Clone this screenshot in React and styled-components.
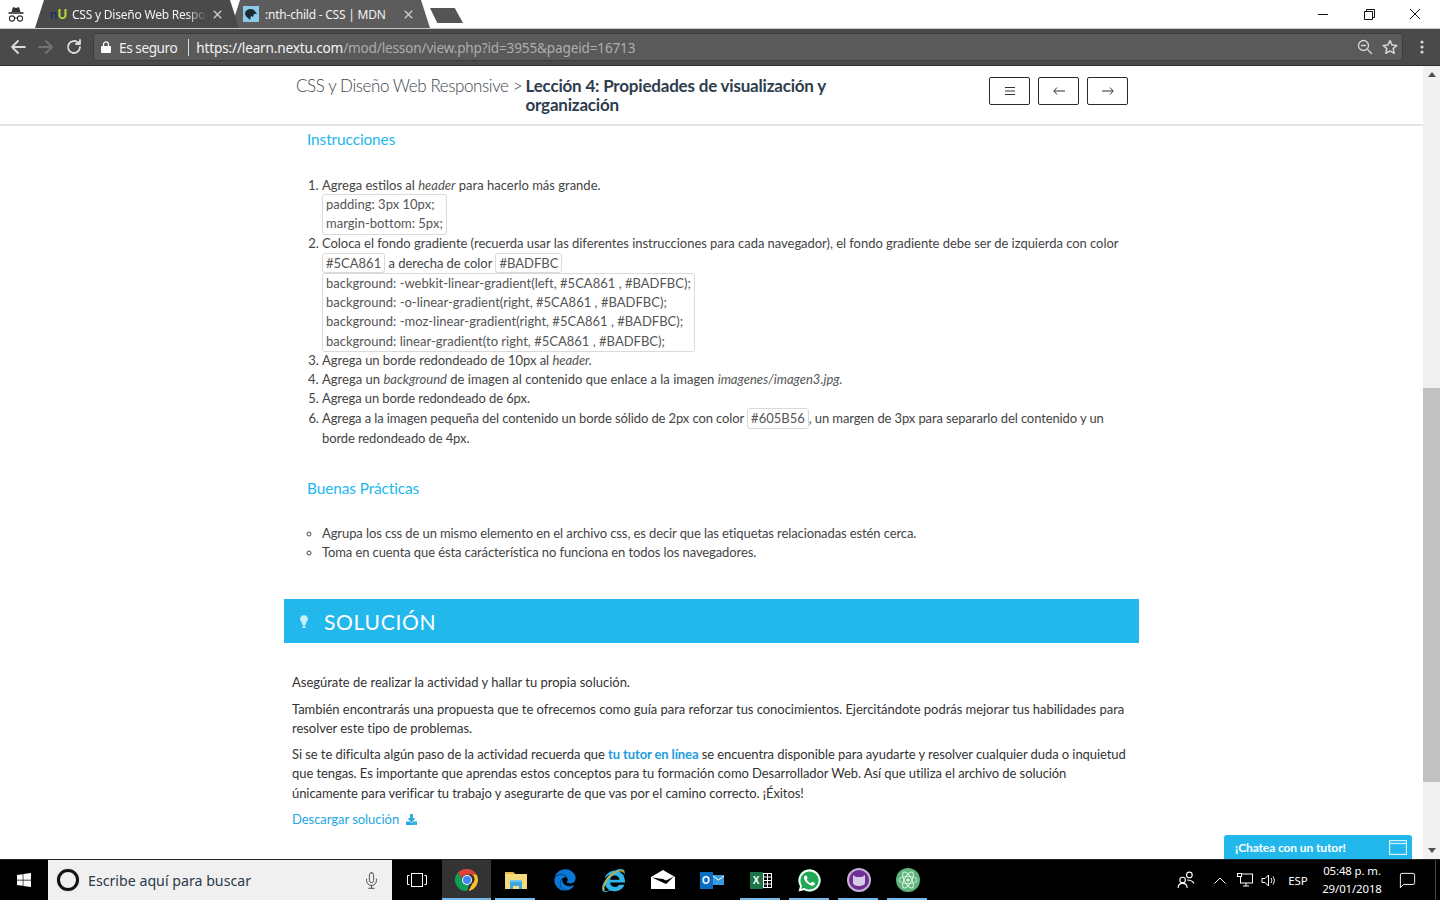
import React from "react";
import styled, { createGlobalStyle } from "styled-components";
import { FaWhatsapp, FaEdge, FaInternetExplorer, FaWindows, FaDownload } from "react-icons/fa";
import { FiMic, FiMessageSquare } from "react-icons/fi";

const Global = createGlobalStyle`
  html, body { margin: 0; padding: 0; height: 100%; overflow: hidden; background: #fff; }
  #root { height: 100%; }
  * { box-sizing: border-box; }
`;

const Page = styled.div`
  width: 1440px; height: 900px; display: flex; flex-direction: column; overflow: hidden;
  font-family: "Lato", "Liberation Sans", sans-serif; color: #333;
`;
const TitleBar = styled.div`
  height: 29px; flex: none; display: flex; align-items: flex-end; background: #fff;
  border-bottom: 1px solid #c9c9c9; font-family: "Noto Sans", sans-serif;
`;
const Incognito = styled.div`
  width: 35px; height: 28px; flex: none; display: flex; align-items: center; justify-content: flex-start; padding-left: 7px;
`;
const Tab = styled.div`
  width: ${p => p.$w}px; height: 28px; flex: none; margin-left: ${p => p.$ml || 0}px;
  background: ${p => (p.$active ? "#4a4a4a" : "#5c5c5c")};
  clip-path: polygon(0 100%, 9px 0, calc(100% - 9px) 0, 100% 100%);
  display: flex; align-items: center; gap: 6px; padding: 0 17px 0 ${p => p.$pl}px; color: #f2f2f2; font-size: 12px;
  position: relative; z-index: ${p => (p.$active ? 2 : 1)};
`;
const TabTitle = styled.span`
  flex: 1; white-space: nowrap; overflow: hidden; letter-spacing: -0.22px;
  ${p => p.$fade && "-webkit-mask-image: linear-gradient(to right, #000 85%, transparent);"}
`;
const NuLogo = styled.span`
  font-family: "Lato", sans-serif; font-weight: 900; font-size: 13px; display: inline-flex; width: 16px; flex: none; letter-spacing: 0;
`;
const NuN = styled.span` color: #1d3560; `;
const NuU = styled.span` color: #b5d334; `;
const NewTab = styled.div`
  width: 33px; height: 15px; margin: 0 0 5px 0; flex: none; background: #555;
  clip-path: polygon(0 0, 75% 0, 100% 100%, 22% 100%);
`;
const WindowControls = styled.div`
  margin-left: auto; height: 28px; display: flex; align-items: center; align-self: flex-start; padding-right: 2px;
`;
const WinBtn = styled.div`
  width: 46px; height: 28px; display: flex; align-items: center; justify-content: center;
`;
const Toolbar = styled.div`
  height: 37px; flex: none; background: #4a4a4a; border-bottom: 1px solid #2f2f2f;
  display: flex; align-items: center; font-family: "Noto Sans", sans-serif; padding-left: 4px;
`;
const NavBtn = styled.div`
  width: 28px; height: 28px; display: flex; align-items: center; justify-content: center; flex: none;
`;
const Omnibox = styled.div`
  width: 1310px; height: 28px; margin-left: 5px; background: #5a5a5a; border: 1px solid #3c3c3c; border-radius: 3px;
  display: flex; align-items: center; padding-left: 7px; font-size: 13.6px; color: #f0f0f0; flex: none;
`;
const Secure = styled.span`
  margin-left: 8px; padding-right: 11px; border-right: 1px solid #dcdcdc; line-height: 17px; white-space: nowrap; letter-spacing: -0.42px;
`;
const Url = styled.span` margin-left: 7px; white-space: nowrap; letter-spacing: -0.17px; color: #f4f4f4; `;
const UrlDim = styled.span` color: #adadad; `;
const OmniEnd = styled.div`
  margin-left: auto; display: flex; align-items: center; gap: 9px; padding-right: 4px;
`;
const MenuDots = styled.div`
  width: 38px; flex: none; display: flex; align-items: center; justify-content: center;
`;
const Viewport = styled.div`
  flex: 1; min-height: 0; display: flex; position: relative; background: #fff;
`;
const Main = styled.div`
  flex: 1; min-width: 0; display: flex; flex-direction: column; overflow: hidden;
`;
const LessonHeader = styled.div`
  height: 60px; flex: none; border-bottom: 2px solid #e3e3e3; display: flex; align-items: flex-start; padding: 10px 0 0 296px;
`;
const Breadcrumb = styled.span`
  font-weight: 300; font-size: 17px; line-height: 19px; color: #3c4650; white-space: nowrap; letter-spacing: -0.42px; width: 229.500px; flex: none;
`;
const LessonTitle = styled.h1`
  margin: 0; width: 320px; flex: none; font-size: 17px; line-height: 19px; font-weight: 700; color: #2e3d4d; letter-spacing: -0.2px;
`;
const HeaderBtns = styled.div`
  margin: 1px 0 0 143.500px; display: flex; gap: 8px; flex: none;
`;
const HeaderBtn = styled.div`
  width: 41px; height: 28px; border: 1px solid #2a2a2a; border-radius: 2px; display: flex; align-items: center; justify-content: center;
`;
const Body = styled.div`
  flex: 1; min-height: 0; overflow: hidden; width: 855px; margin-left: 284px; font-size: 13px; line-height: 19.200px; letter-spacing: -0.04px;
`;
const Section = styled.div` padding: 0 0 0 23px; `;
const Heading = styled.h3`
  margin: ${p => p.$mt || 0}px 0 0; font-size: 15.400px; line-height: 20px; font-weight: 400; color: #22b8ec; letter-spacing: -0.1px;
`;
const Ol = styled.ol`
  margin: 27px 0 0; padding: 0 14px 0 15px; color: #444;
`;
const Ul = styled.ul`
  margin: 26px 0 0; padding: 0 0 0 15px; color: #444; list-style: circle;
`;
const Li = styled.li` letter-spacing: ${p => p.$ls ?? -0.04}px; `;
const Em = styled.em` color: #555; `;
const Pre = styled.div`
  display: table; padding: 0 3px; border: 1px solid #dadada; border-radius: 3px; color: #555; white-space: pre;
  margin-top: ${p => p.$mt || 0}px; margin-bottom: -1px; background: #fff; letter-spacing: 0.01px;
`;
const Code = styled.code`
  font-family: inherit; display: inline-block; line-height: 18.200px; padding: 0 3px; border: 1px solid #dadada; border-radius: 3px; color: #555; letter-spacing: 0;
`;
const Banner = styled.div`
  margin-top: 37px; height: 44px; background: #22b8ec; color: #fff; display: flex; align-items: center; padding-left: 15px; gap: 15px;
`;
const BannerTitle = styled.h2`
  margin: 0; font-size: 21px; font-weight: 400; letter-spacing: 0.7px;
`;
const Solution = styled.div` padding: 30px 10px 0 8px; color: #333; `;
const P = styled.p` margin: 0 0 7.150px; letter-spacing: ${p => p.$ls ?? -0.04}px; `;
const TutorLink = styled.a` color: #1f9ce0; font-weight: 700; letter-spacing: -0.12px; `;
const Download = styled.a`
  display: inline-flex; align-items: center; gap: 7px; color: #22a7e2;
`;
const Scrollbar = styled.div`
  width: 17px; flex: none; background: #f1f1f1; display: flex; flex-direction: column; align-items: center;
`;
const ScrollArrow = styled.div`
  height: 17px; width: 17px; flex: none; display: flex; align-items: center; justify-content: center;
`;
const ScrollThumb = styled.div`
  width: 100%; height: 394px; margin-top: 305px; background: #c1c1c1; flex: none;
`;
const ScrollRest = styled.div` flex: 1; `;
const Chat = styled.div`
  position: absolute; left: 1224px; bottom: 0; width: 188px; height: 24px; background: #22b8ec; color: #fff; border-radius: 3px 3px 0 0;
  display: flex; align-items: center; justify-content: space-between; padding: 0 5px 0 11px; font-size: 12px; font-weight: 700; letter-spacing: -0.1px;
`;
const Taskbar = styled.div`
  height: 41px; flex: none; background: #000; border-top: 1px solid #222; display: flex; align-items: stretch; color: #fff; font-family: "Noto Sans", sans-serif;
`;
const Start = styled.div`
  width: 48px; flex: none; display: flex; align-items: center; justify-content: center;
`;
const Search = styled.div`
  width: 344px; flex: none; background: #f0f0f0; display: flex; align-items: center; padding: 0 12px 0 9px; color: #2c3a4a; font-size: 14.200px; gap: 9px;
`;
const SearchText = styled.span` flex: 1; white-space: nowrap; `;
const Cortana = styled.span`
  width: 22px; height: 22px; border-radius: 50%; border: 3px solid #111; box-shadow: 0 0 1px #555; flex: none;
`;
const TaskItem = styled.div`
  width: ${p => p.$w || 49}px; flex: none; display: flex; align-items: center; justify-content: center; position: relative;
  background: ${p => (p.$active ? "#333" : "transparent")};
`;
const Underline = styled.span`
  position: absolute; bottom: 0; left: ${p => (p.$full ? 0 : 4)}px; right: ${p => (p.$full ? 0 : 5)}px; height: 2px; background: #76b9ed;
`;
const Tray = styled.div`
  margin: 0 4px 0 auto; display: flex; align-items: center; flex: none; padding-right: 12px; border-right: 1px solid #444; height: 100%;
`;
const TraySlot = styled.div`
  width: ${p => p.$w}px; display: flex; align-items: center; justify-content: center; flex: none; font-size: ${p => p.$fs || 12}px;
`;
const Clock = styled.div`
  text-align: center; font-size: 11.400px; line-height: 18px; white-space: nowrap; letter-spacing: -0.1px;
`;
const OutlookBadge = styled.span`
  display: inline-flex; width: 13px; height: 17px; background: #0a6cc0; color: #fff; font: 700 10px "Liberation Sans", sans-serif; align-items: center; justify-content: center;
`;
const ExcelBadge = styled(OutlookBadge)` background: #1c7345; `;
const BadgeWrap = styled.span` display: inline-flex; align-items: center; `;
const WhatsappDisc = styled.span`
  display: inline-flex; border-radius: 50%; background: radial-gradient(circle, #1fa855 62%, transparent 66%);
`;
const IeWrap = styled.span` position: relative; display: inline-flex; `;
const IeOrbit = styled.svg` position: absolute; left: 0; top: 0; `;

const TabX = () => (
  <svg width="9" height="9" viewBox="0 0 9 9" style={{ flex: "none" }}><path d="M.8.8l7.400 7.400M8.200.8L.8 8.200" stroke="#c6c6c6" strokeWidth="1.500" /></svg>
);
const IncognitoIcon = () => (
  <svg width="18" height="18" viewBox="0 0 18 18" fill="none" stroke="#333">
    <path d="M4.500 7 L6 2 L9 3 L12 2 L13.500 7Z" fill="#333" stroke="none" />
    <path d="M1.500 8 H16.500" strokeWidth="1.600" />
    <circle cx="5" cy="13.500" r="2.600" strokeWidth="1.100" />
    <circle cx="13" cy="13.500" r="2.600" strokeWidth="1.100" />
    <path d="M7.600 13 H10.400" strokeWidth="1" />
  </svg>
);
const DinoFavicon = () => (
  <svg width="16" height="16" viewBox="0 0 16 16" style={{ flex: "none" }}>
    <rect width="16" height="16" fill="#8ccbe8" />
    <path d="M2 7 C3 3 8 2 11 4 L14 8 L11 8 L10 11 L8 10 L7 14 L5 12 C3 11 2 9 2 7Z" fill="#1d2b34" />
  </svg>
);
const Chrome = () => (
  <svg width="24" height="24" viewBox="0 0 48 48">
    <path d="M24 2a22 22 0 0 1 19 11H24a11 11 0 0 0-10.500 8L6 9A22 22 0 0 1 24 2z" fill="#db4437" />
    <path d="M43 13a22 22 0 0 1-16 32.800L35 31a11 11 0 0 0-1-18z" fill="#fbc02d" />
    <path d="M6 9l9 15a11 11 0 0 0 13.500 9.800L24 46A22 22 0 0 1 6 9z" fill="#0f9d58" />
    <circle cx="24" cy="24" r="10" fill="#fff" />
    <circle cx="24" cy="24" r="8" fill="#4285f4" />
  </svg>
);
const Folder = () => (
  <svg width="22" height="20" viewBox="0 0 22 20">
    <path d="M0 2h8l2 2h12v15H0z" fill="#f5d97e" />
    <path d="M0 2h8l2 2H0z" fill="#e7b94a" />
    <path d="M5 12h12v7h-3v-3H8v3H5z" fill="#3aa7e0" />
    <rect x="5" y="10" width="12" height="2" fill="#6fc3ee" />
  </svg>
);
const Mail = () => (
  <svg width="24" height="20" viewBox="0 0 24 20">
    <path d="M0 7 L12 0 L24 7 V19 H0 Z" fill="#fff" />
    <path d="M1 7.500 L15 14 L23 6.500 L15 10.500 L12 9Z" fill="#000" />
  </svg>
);
const CatIcon = () => (
  <svg width="24" height="24" viewBox="0 0 24 24">
    <circle cx="12" cy="12" r="12" fill="#c6b0d8" />
    <circle cx="12" cy="12" r="10" fill="#6f2f92" />
    <path d="M6 7 L9 9 H15 L18 7 V15 C18 17 15 18 12 18 C9 18 6 17 6 15Z" fill="#d9c9e6" />
  </svg>
);
const Atom = () => (
  <svg width="24" height="24" viewBox="0 0 24 24" fill="none">
    <circle cx="12" cy="12" r="12" fill="#5fb57c" />
    <g stroke="#d9f2e2" strokeWidth="1">
      <ellipse cx="12" cy="12" rx="9" ry="3.600" />
      <ellipse cx="12" cy="12" rx="9" ry="3.600" transform="rotate(60 12 12)" />
      <ellipse cx="12" cy="12" rx="9" ry="3.600" transform="rotate(120 12 12)" />
    </g>
    <circle cx="12" cy="12" r="1.600" fill="#eafaf0" />
  </svg>
);
const Bulb = () => (
  <svg width="10" height="15" viewBox="0 0 10 15">
    <path d="M5 1a4 4 0 0 0-2.400 7.200L3.400 11h3.200l.8-2.800A4 4 0 0 0 5 1z" fill="#c8eefb" />
    <rect x="3.600" y="11.600" width="2.800" height="2.400" fill="#c8eefb" />
  </svg>
);
const stroke = { fill: "none", strokeLinecap: "round", strokeLinejoin: "round" };

export default function App() {
  return (
    <Page>
      <Global />
      <TitleBar>
        <Incognito><IncognitoIcon /></Incognito>
        <Tab $active $w={204} $pl={15}>
          <NuLogo><NuN>n</NuN><NuU>U</NuU></NuLogo>
          <TabTitle $fade>CSS y Diseño Web Responsive</TabTitle>
          <TabX />
        </Tab>
        <Tab $w={199} $ml={-8} $pl={12}>
          <DinoFavicon />
          <TabTitle>:nth-child - CSS | MDN</TabTitle>
          <TabX />
        </Tab>
        <NewTab />
        <WindowControls>
          <WinBtn><svg width="11" height="11" viewBox="0 0 11 11"><path d="M0 5.500H10" stroke="#111" /></svg></WinBtn>
          <WinBtn><svg width="11" height="11" viewBox="0 0 11 11" fill="none" stroke="#111"><path d="M.5 2.500h8v8h-8zM2.500 2.500v-2h8v8h-2" /></svg></WinBtn>
          <WinBtn><svg width="12" height="12" viewBox="0 0 12 12"><path d="M1 1L11 11M11 1L1 11" stroke="#111" /></svg></WinBtn>
        </WindowControls>
      </TitleBar>
      <Toolbar>
        <NavBtn><svg width="16" height="16" viewBox="0 0 16 16" {...stroke} stroke="#dcdcdc" strokeWidth="1.800"><path d="M15 8H2M8 2L2 8l6 6" /></svg></NavBtn>
        <NavBtn><svg width="16" height="16" viewBox="0 0 16 16" {...stroke} stroke="#737373" strokeWidth="1.800"><path d="M1 8h13M8 2l6 6-6 6" /></svg></NavBtn>
        <NavBtn><svg width="16" height="16" viewBox="0 0 16 16" {...stroke} stroke="#dcdcdc" strokeWidth="1.800"><path d="M14 8a6 6 0 1 1-1.800-4.300" /><path d="M14 1v4h-4" fill="#dcdcdc" /></svg></NavBtn>
        <Omnibox>
          <svg width="10" height="12" viewBox="0 0 10 12"><rect y="5" width="10" height="7" rx="1" fill="#fff" /><path d="M2.500 5V3.400a2.500 2.500 0 0 1 5 0V5" fill="none" stroke="#fff" strokeWidth="1.200" /></svg>
          <Secure>Es seguro</Secure>
          <Url>https://learn.nextu.com<UrlDim>/mod/lesson/view.php?id=3955&amp;pageid=16713</UrlDim></Url>
          <OmniEnd>
            <svg width="16" height="16" viewBox="0 0 16 16" fill="none" stroke="#d6d6d6" strokeWidth="1.300"><circle cx="6.500" cy="6.500" r="5" /><path d="M10.500 10.500L15 15M4 6.500h5" /></svg>
            <svg width="16" height="16" viewBox="0 0 16 16" fill="none" stroke="#d6d6d6" strokeWidth="1.500" strokeLinejoin="round"><path d="M8 1.500l2 4.400 4.800.5-3.600 3.200 1 4.700L8 11.900l-4.200 2.400 1-4.700L1.200 6.400 6 5.900z" /></svg>
          </OmniEnd>
        </Omnibox>
        <MenuDots><svg width="4" height="14" viewBox="0 0 4 14" fill="#d6d6d6"><circle cx="2" cy="2" r="1.600" /><circle cx="2" cy="7" r="1.600" /><circle cx="2" cy="12" r="1.600" /></svg></MenuDots>
      </Toolbar>
      <Viewport>
        <Main>
          <LessonHeader>
            <Breadcrumb>CSS y Diseño Web Responsive &gt;</Breadcrumb>
            <LessonTitle>Lección 4: Propiedades de visualización y organización</LessonTitle>
            <HeaderBtns>
              <HeaderBtn><svg width="10" height="8" viewBox="0 0 10 8" stroke="#333"><path d="M0 .5h10M0 4h10M0 7.500h10" /></svg></HeaderBtn>
              <HeaderBtn><svg width="12" height="8" viewBox="0 0 12 8" fill="none" stroke="#333"><path d="M12 4H1M4 .5L.8 4 4 7.500" /></svg></HeaderBtn>
              <HeaderBtn><svg width="12" height="8" viewBox="0 0 12 8" fill="none" stroke="#333"><path d="M0 4h11M8 .5L11.200 4 8 7.500" /></svg></HeaderBtn>
            </HeaderBtns>
          </LessonHeader>
          <Body>
            <Section>
              <Heading $mt={3}>Instrucciones</Heading>
              <Ol>
                <Li $ls={0}>Agrega estilos al <Em>header</Em> para hacerlo más grande.
                  <Pre $mt={-1}>{"padding: 3px 10px;\nmargin-bottom: 5px;"}</Pre>
                </Li>
                <Li>Coloca el fondo gradiente (recuerda usar las diferentes instrucciones para cada navegador), el fondo gradiente debe ser de izquierda con color <Code>#5CA861</Code> a derecha de color <Code>#BADFBC</Code>
                  <Pre>{"background: -webkit-linear-gradient(left, #5CA861 , #BADFBC);\nbackground: -o-linear-gradient(right, #5CA861 , #BADFBC);\nbackground: -moz-linear-gradient(right, #5CA861 , #BADFBC);\nbackground: linear-gradient(to right, #5CA861 , #BADFBC);"}</Pre>
                </Li>
                <Li>Agrega un borde redondeado de 10px al <Em>header.</Em></Li>
                <Li $ls={0.01}>Agrega un <Em>background</Em> de imagen al contenido que enlace a la imagen <Em>imagenes/imagen3.jpg.</Em></Li>
                <Li $ls={-0.1}>Agrega un borde redondeado de 6px.</Li>
                <Li $ls={-0.11}>Agrega a la imagen pequeña del contenido un borde sólido de 2px con color <Code>#605B56</Code>, un margen de 3px para separarlo del contenido y un borde redondeado de 4px.</Li>
              </Ol>
              <Heading $mt={30}>Buenas Prácticas</Heading>
              <Ul>
                <Li $ls={-0.1}>Agrupa los css de un mismo elemento en el archivo css, es decir que las etiquetas relacionadas estén cerca.</Li>
                <Li $ls={-0.1}>Toma en cuenta que ésta carácterística no funciona en todos los navegadores.</Li>
              </Ul>
            </Section>
            <Banner><Bulb /><BannerTitle>SOLUCIÓN</BannerTitle></Banner>
            <Solution>
              <P $ls={-0.01}>Asegúrate de realizar la actividad y hallar tu propia solución.</P>
              <P>También encontrarás una propuesta que te ofrecemos como guía para reforzar tus conocimientos. Ejercitándote podrás mejorar tus habilidades para resolver este tipo de problemas.</P>
              <P $ls={-0.07}>Si se te dificulta algún paso de la actividad recuerda que <TutorLink>tu tutor en línea</TutorLink> se encuentra disponible para ayudarte y resolver cualquier duda o inquietud que tengas. Es importante que aprendas estos conceptos para tu formación como Desarrollador Web. Así que utiliza el archivo de solución únicamente para verificar tu trabajo y asegurarte de que vas por el camino correcto. ¡Éxitos!</P>
              <Download>Descargar solución <FaDownload size={11} /></Download>
            </Solution>
          </Body>
        </Main>
        <Scrollbar>
          <ScrollArrow><svg width="8" height="5" viewBox="0 0 8 5"><path d="M4 0l4 5H0z" fill="#505050" /></svg></ScrollArrow>
          <ScrollThumb />
          <ScrollRest />
          <ScrollArrow><svg width="8" height="5" viewBox="0 0 8 5"><path d="M4 5l4-5H0z" fill="#505050" /></svg></ScrollArrow>
        </Scrollbar>
        <Chat>
          <span>¡Chatea con un tutor!</span>
          <svg width="18" height="15" viewBox="0 0 18 15" fill="none" stroke="#d5f2fc" strokeWidth="1.200"><rect x=".6" y=".6" width="16.800" height="13.800" /><path d="M.6 3.500H17.400" /></svg>
        </Chat>
      </Viewport>
      <Taskbar>
        <Start><FaWindows size={16} color="#fff" /></Start>
        <Search>
          <Cortana />
          <SearchText>Escribe aquí para buscar</SearchText>
          <FiMic size={17} color="#444" strokeWidth={1.300} />
        </Search>
        <TaskItem $w={50}><svg width="20" height="14" viewBox="0 0 20 14" fill="none" stroke="#fff"><rect x="4.500" y=".5" width="11" height="13" /><path d="M2.500 2.500H.5v9h2M17.500 2.500h2v9h-2" /></svg></TaskItem>
        <TaskItem $active><Chrome /><Underline $full /></TaskItem>
        <TaskItem><Folder /><Underline /></TaskItem>
        <TaskItem><FaEdge size={22} color="#0a78d7" /></TaskItem>
        <TaskItem>
          <IeWrap>
            <FaInternetExplorer size={23} color="#2fb4e8" />
            <IeOrbit width="23" height="23" viewBox="0 0 23 23" fill="none"><path d="M2.500 21.500C0 19 4 9 12 4c4-2.500 9-3 9.500-.5" stroke="#d9a92b" strokeWidth="1.500" /></IeOrbit>
          </IeWrap>
        </TaskItem>
        <TaskItem><Mail /></TaskItem>
        <TaskItem><BadgeWrap><OutlookBadge>O</OutlookBadge><svg width="11" height="10" viewBox="0 0 11 10"><rect width="11" height="10" fill="#3a98dd" /><path d="M0 1l5.500 4L11 1" fill="none" stroke="#fff" /></svg></BadgeWrap></TaskItem>
        <TaskItem><BadgeWrap><ExcelBadge>X</ExcelBadge><svg width="9" height="15" viewBox="0 0 9 15" fill="none" stroke="#fff"><rect x=".5" y=".5" width="8" height="14" /><path d="M0 4h9M0 7.500h9M0 11h9M4.500 0v15" /></svg></BadgeWrap><Underline /></TaskItem>
        <TaskItem><WhatsappDisc><FaWhatsapp size={25} color="#fff" /></WhatsappDisc><Underline /></TaskItem>
        <TaskItem><CatIcon /><Underline /></TaskItem>
        <TaskItem><Atom /><Underline /></TaskItem>
        <Tray>
          <TraySlot $w={32}><svg width="18" height="18" viewBox="0 0 16 16" fill="none" stroke="#fff"><circle cx="5" cy="8" r="2.500" /><circle cx="11" cy="3.500" r="2.500" /><path d="M1 15c0-2 1-4 4-4s4 2 4 4M9 8c3 0 5 1 6 3" /></svg></TraySlot>
          <TraySlot $w={35}><svg width="12" height="7" viewBox="0 0 12 7" fill="none" stroke="#fff"><path d="M.5 6.500L6 1l5.500 5.500" /></svg></TraySlot>
          <TraySlot $w={16}><svg width="16" height="14" viewBox="0 0 16 14" fill="none" stroke="#fff"><rect x="3.500" y="1" width="12" height="9" /><path d="M9 10v3M6 13h6" /><rect x=".5" y=".5" width="4" height="3" fill="#000" /></svg></TraySlot>
          <TraySlot $w={30}><svg width="15" height="13" viewBox="0 0 15 13" fill="none" stroke="#fff"><path d="M1 4.500h3L7.500 1v11L4 8.500H1zM10 4c1 1.500 1 3.500 0 5M12 2.500c1.800 2.500 1.800 5.500 0 8" /></svg></TraySlot>
          <TraySlot $w={30} $fs={11.500}>ESP</TraySlot>
          <TraySlot $w={78}><Clock>05:48 p. m.<br />29/01/2018</Clock></TraySlot>
          <TraySlot $w={32}><FiMessageSquare size={19} color="#fff" strokeWidth={1.200} /></TraySlot>
        </Tray>
      </Taskbar>
    </Page>
  );
}
